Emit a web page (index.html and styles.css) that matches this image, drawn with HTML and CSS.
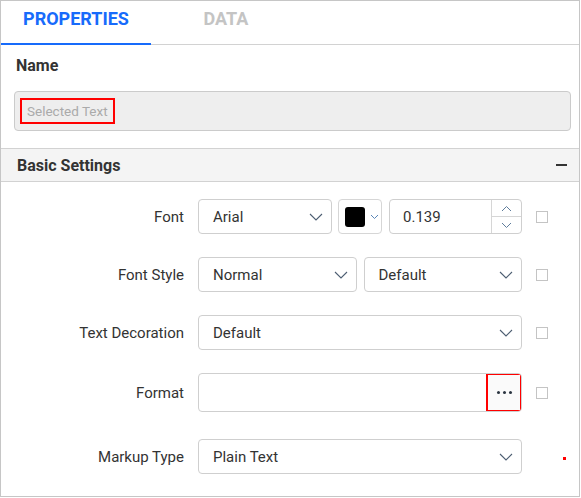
FILE: index.html
```html
<!DOCTYPE html>
<html>
<head>
<meta charset="utf-8">
<link rel="stylesheet" href="styles.css">
</head>
<body>
<div class="panel">
  <div class="tabs">
    <div class="tab active">PROPERTIES</div>
    <div class="tab">DATA</div>
  </div>
  <div class="name-section">
    <div class="name-label">Name</div>
    <div class="name-input"><span class="sel-text">Selected Text</span></div>
  </div>
  <div class="group-header"><span class="group-title">Basic Settings</span><span class="minus"></span></div>
  <div class="group-body">
    <div class="row">
      <div class="lbl">Font</div>
      <div class="ctrl split">
        <div class="dd dd-font"><span>Arial</span><svg class="chev" width="14" height="8" viewBox="0 0 14 8"><path d="M1 1L7 7L13 1" fill="none" stroke="#4d5e72" stroke-width="1.1"/></svg></div>
        <div class="color"><span class="swatch"></span><svg class="chev-s" width="9" height="6" viewBox="0 0 9 6"><path d="M1 1L4.5 4.5L8 1" fill="none" stroke="#5a86b8" stroke-width="1"/></svg></div>
        <div class="num"><span class="num-val">0.139</span>
          <div class="spin">
            <div class="spin-btn"><svg width="11" height="7" viewBox="0 0 11 7"><path d="M1 6L5.5 1.5L10 6" fill="none" stroke="#5f7d9c" stroke-width="1"/></svg></div>
            <div class="spin-btn spin-down"><svg width="11" height="7" viewBox="0 0 11 7"><path d="M1 1L5.5 5.5L10 1" fill="none" stroke="#5f7d9c" stroke-width="1"/></svg></div>
          </div>
        </div>
      </div>
      <span class="cb"></span>
    </div>
    <div class="row">
      <div class="lbl">Font Style</div>
      <div class="ctrl halves">
        <div class="dd"><span>Normal</span><svg class="chev" width="14" height="8" viewBox="0 0 14 8"><path d="M1 1L7 7L13 1" fill="none" stroke="#4d5e72" stroke-width="1.1"/></svg></div>
        <div class="dd"><span>Default</span><svg class="chev" width="14" height="8" viewBox="0 0 14 8"><path d="M1 1L7 7L13 1" fill="none" stroke="#4d5e72" stroke-width="1.1"/></svg></div>
      </div>
      <span class="cb"></span>
    </div>
    <div class="row">
      <div class="lbl">Text Decoration</div>
      <div class="ctrl">
        <div class="dd"><span>Default</span><svg class="chev" width="14" height="8" viewBox="0 0 14 8"><path d="M1 1L7 7L13 1" fill="none" stroke="#4d5e72" stroke-width="1.1"/></svg></div>
      </div>
      <span class="cb"></span>
    </div>
    <div class="row row-tall">
      <div class="lbl">Format</div>
      <div class="ctrl">
        <div class="fmt"><span class="fmt-field"></span><span class="dots-btn"><i></i><i></i><i></i></span></div>
      </div>
      <span class="cb"></span>
    </div>
    <div class="row row-last">
      <div class="lbl">Markup Type</div>
      <div class="ctrl">
        <div class="dd"><span>Plain Text</span><svg class="chev" width="14" height="8" viewBox="0 0 14 8"><path d="M1 1L7 7L13 1" fill="none" stroke="#4d5e72" stroke-width="1.1"/></svg></div>
      </div>
      <span class="marker"></span>
    </div>
  </div>
</div>
</body>
</html>
```

FILE: styles.css
```css
* { box-sizing: border-box; }
html, body { margin: 0; padding: 0; background: #fff; }
body { font-family: Roboto, "Liberation Sans", sans-serif; color: #333; }

.panel {
  width: 580px;
  height: 497px;
  border: 1px solid #c6c6c6;
  background: #fff;
  overflow: hidden;
}

.tabs {
  display: flex;
  height: 44px;
  border-bottom: 1px solid #d2d2d2;
}
.tab {
  width: 150px;
  height: 45px;
  margin-top: -1px;
  margin-bottom: -1px;
  text-align: center;
  font-size: 18px;
  font-weight: 700;
  line-height: 38px;
  color: #c4c4c4;
  border-bottom: 2px solid transparent;
}
.tab.active {
  color: #176bfb;
  background: #fff;
  border-bottom-color: #176bfb;
}

.name-section {
  padding: 11px 8px 17px 13px;
}
.name-label {
  font-size: 16px;
  font-weight: 700;
  line-height: 19px;
  padding-left: 2px;
  margin-bottom: 16px;
  color: #333;
}
.name-input {
  height: 40px;
  background: #eeeeee;
  border: 1px solid #cbcbcb;
  border-radius: 4px;
  display: flex;
  align-items: center;
  padding-left: 5px;
}
.sel-text {
  display: inline-block;
  height: 26px;
  line-height: 22px;
  border: 2px solid #f00;
  padding: 0 5px 0 5px;
  font-size: 13.5px;
  color: #aaaaaa;
}

.group-header {
  height: 34px;
  border-top: 1px solid #d2d2d2;
  border-bottom: 1px solid #d2d2d2;
  background: #f4f4f4;
  display: flex;
  align-items: center;
  justify-content: space-between;
  padding: 0 12px 0 16px;
}
.group-title {
  font-size: 16px;
  font-weight: 700;
  color: #333;
}
.minus {
  width: 11px;
  height: 1.5px;
  background: #333;
}

.group-body {
  padding-top: 17px;
  display: flex;
  flex-direction: column;
  gap: 23px;
}
.row {
  display: grid;
  grid-template-columns: 183px 324px 12px;
  column-gap: 14px;
  align-items: center;
  height: 35px;
}
.row-tall { height: 39px; }
.row-last { margin-top: 4px; }

.lbl {
  text-align: right;
  font-size: 15px;
  color: #333;
  padding-top: 1px;
}

.ctrl { display: flex; height: 100%; }
.split { gap: 6px; }
.halves { gap: 7px; }
.halves .dd { flex: 1; }

.dd {
  flex: 1;
  height: 100%;
  border: 1px solid #cfcfcf;
  border-radius: 4px;
  display: flex;
  align-items: center;
  justify-content: space-between;
  padding: 0 8px 0 14px;
  font-size: 15px;
  color: #333;
}
.dd-font { flex: 0 0 134px; }
.chev { display: block; }

.color {
  flex: 0 0 44px;
  height: 100%;
  border: 1px solid #d6d6d6;
  border-radius: 4px;
  display: flex;
  align-items: center;
  padding-left: 6px;
  gap: 5px;
}
.swatch {
  width: 20px;
  height: 20px;
  background: #000;
  border-radius: 3px;
}
.chev-s { display: block; }

.num {
  flex: 1;
  margin-left: 1px;
  height: 100%;
  border: 1px solid #cfcfcf;
  border-radius: 4px;
  display: flex;
  align-items: center;
  justify-content: space-between;
}
.num-val {
  padding-left: 13px;
  font-size: 15px;
  color: #333;
}
.spin {
  width: 30px;
  height: 100%;
  border-left: 1px solid #d6d6d6;
  display: flex;
  flex-direction: column;
}
.spin-btn {
  flex: 1;
  display: flex;
  align-items: center;
  justify-content: center;
}
.spin-down { border-top: 1px solid #d6d6d6; }

.fmt {
  flex: 1;
  height: 100%;
  border: 1px solid #cfcfcf;
  border-radius: 4px;
  display: flex;
  overflow: hidden;
}
.fmt-field { flex: 1; }
.dots-btn {
  width: 36px;
  margin: -1px -1px -1px 0;
  border: 2px solid #f00;
  background: #fafafa;
  display: flex;
  align-items: center;
  justify-content: center;
  gap: 3px;
}
.dots-btn i {
  width: 3px;
  height: 3px;
  border-radius: 50%;
  background: #2b3440;
}

.cb {
  width: 12px;
  height: 12px;
  border: 1px solid #c4c4c4;
}
.marker {
  width: 3px;
  height: 3px;
  background: #f00;
  margin-left: 27px;
  margin-top: 4px;
}
```
